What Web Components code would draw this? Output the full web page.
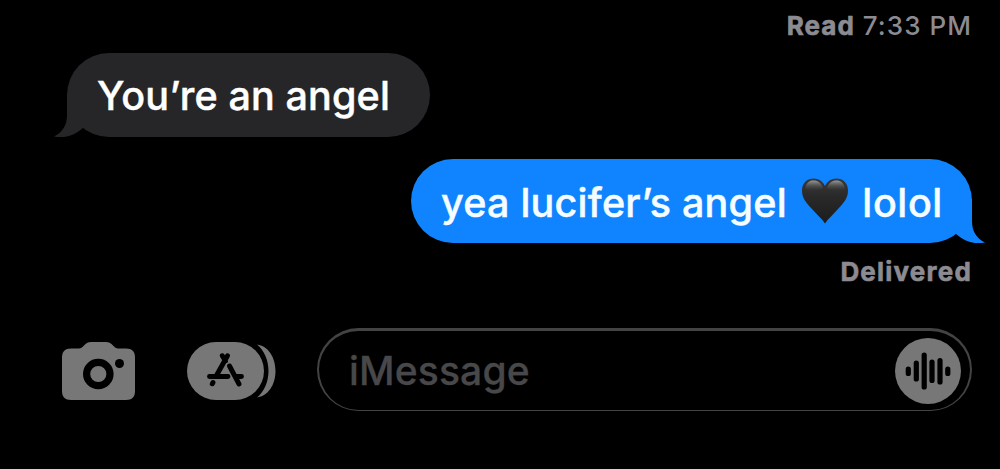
<!DOCTYPE html>
<html lang="en">
<head>
<meta charset="utf-8">
<title>Messages</title>
<style>
  body {
    margin: 0;
    background: #000;
    font-family: Inter, "Liberation Sans", sans-serif;
  }

  message-status b {
    -webkit-text-stroke: 0.6px;
  }
</style>
</head>
<body>
<message-thread>
  <message-status><b>Read</b> 7:33 PM</message-status>
  <message-bubble style="--width: 363px; --spacing: 0.13px">You’re an angel</message-bubble>
  <message-bubble class="sent" style="--width: 561px; --spacing: 0.22px"><span>yea lucifer’s angel</span><black-heart></black-heart><span>lolol</span></message-bubble>
  <message-status class="below"><b>Delivered</b></message-status>
  <compose-bar slot="compose">iMessage</compose-bar>
</message-thread>

<script>
class MessageThread extends HTMLElement {
  constructor() {
    super();
    this.root = this.attachShadow({mode: 'open'});
    this.root.innerHTML = `
      <style>
        :host {
          background: #000;
          box-sizing: border-box;
          display: flex;
          flex-direction: column;
          height: 469px;
          overflow: hidden;
          padding: 0 28px 0 62px;
        }
      </style>
      <slot></slot>
      <slot name="compose"></slot>
    `;
  }
}
window.customElements.define('message-thread', MessageThread);

class MessageStatus extends HTMLElement {
  constructor() {
    super();
    this.root = this.attachShadow({mode: 'open'});
    this.root.innerHTML = `
      <style>
        :host {
          align-self: flex-end;
          color: #8c8b92;
          display: block;
          font-size: 26px;
          font-weight: 500;
          height: 52.5px;
          letter-spacing: 1.05px;
          line-height: 51px;
          white-space: nowrap;
        }

        :host(.below) {
          height: 85px;
          letter-spacing: 1.2px;
          line-height: 58px;
        }
      </style>
      <slot></slot>
    `;
  }
}
window.customElements.define('message-status', MessageStatus);

class MessageBubble extends HTMLElement {
  constructor() {
    super();
    this.root = this.attachShadow({mode: 'open'});
    this.root.innerHTML = `
      <style>
        :host {
          -webkit-text-stroke: 0.45px;
          align-items: center;
          background: #262628;
          border-radius: 42.25px;
          box-sizing: border-box;
          color: #fff;
          display: flex;
          flex: none;
          font-size: 39.5px;
          font-weight: 500;
          height: 84.5px;
          letter-spacing: var(--spacing);
          line-height: 84px;
          margin: 0 0 21.5px 5px;
          padding: 2px 0 0 30px;
          position: relative;
          white-space: nowrap;
          width: var(--width);
        }

        :host(.sent) {
          align-self: flex-end;
          background: #0f84fe;
          color: #f5fdff;
          margin: 0;
          padding-top: 4px;
        }

        .tail {
          bottom: 0;
          fill: #262628;
          left: -13px;
          position: absolute;
        }

        :host(.sent) .tail {
          fill: #0f84fe;
          left: auto;
          right: -13px;
          transform: scaleX(-1);
        }

        ::slotted(span:last-child) {
          letter-spacing: 0.6px;
        }
      </style>
      <svg class="tail" width="40" height="44" viewBox="0 0 40 44">
        <path d="M13 0V22C13 32 9 39 0 43.5C11 45.5 20 43 29 35L40 20V0Z"/>
      </svg>
      <slot></slot>
    `;
  }
}
window.customElements.define('message-bubble', MessageBubble);

class BlackHeart extends HTMLElement {
  constructor() {
    super();
    this.root = this.attachShadow({mode: 'open'});
    this.root.innerHTML = `
      <style>
        :host {
          display: block;
          flex: none;
          height: 49px;
          margin: 0 14.5px 0 15px;
          width: 46px;
        }

        svg {
          display: block;
        }
      </style>
      <svg width="46" height="46" viewBox="0 0 46 46" role="img" aria-label="🖤">
        <defs>
          <linearGradient id="body" x1="0" y1="0" x2="0" y2="1">
            <stop offset="0" stop-color="#39393b"/>
            <stop offset=".4" stop-color="#29292a"/>
            <stop offset="1" stop-color="#1c1c1d"/>
          </linearGradient>
          <linearGradient id="shine" x1="0" y1="0" x2="0" y2="1">
            <stop offset="0" stop-color="#aaa" stop-opacity=".85"/>
            <stop offset="1" stop-color="#444" stop-opacity="0"/>
          </linearGradient>
        </defs>
        <path fill="url(#body)" d="M23 45.5C20 41 15 36.500 10 31C4 24.500 0 20 0 12.500C0 5 5 .5 11.500 .5C17 .5 21 3.500 23 8C25 3.500 29 .5 34.500 .5C41 .5 46 5 46 12.500C46 20 42 24.500 36 31C31 36.500 26 41 23 45.500Z"/>
        <path fill="url(#shine)" d="M3 12C3.500 5 7 2.500 11.500 2.500C16 2.500 19.500 5 21 10C16 13 9 14 3 12Z"/>
        <path fill="url(#shine)" d="M43 12C42.500 5 39 2.500 34.500 2.500C30 2.500 26.500 5 25 10C30 13 37 14 43 12Z"/>
      </svg>
    `;
  }
}
window.customElements.define('black-heart', BlackHeart);

class ComposeBar extends HTMLElement {
  constructor() {
    super();
    this.root = this.attachShadow({mode: 'open'});
    this.root.innerHTML = `
      <style>
        :host {
          align-items: center;
          display: flex;
          height: 83px;
        }

        svg {
          display: block;
          fill: #777;
          flex: none;
        }

        .camera,
        .apps {
          padding-top: 2px;
        }

        .apps {
          margin: 0 41px 0 52px;
        }

        .field {
          -webkit-text-stroke: 0.3px;
          align-items: center;
          border: 2px solid #434345;
          border-top-width: 3px;
          border-bottom-width: 1.5px;
          border-radius: 42px;
          box-sizing: border-box;
          color: #48484a;
          display: flex;
          flex: 1;
          font-size: 39px;
          font-weight: 500;
          height: 83px;
          justify-content: space-between;
          letter-spacing: 0.15px;
          padding: 0 9px 0 30px;
        }
      </style>
      <svg class="camera" width="73" height="58" viewBox="0 0 73 58">
        <path d="M9 6.500H17C19 6.500 20 5.500 21.500 4L23.500 2C25 .7 26.500 0 29 0H44C46.500 0 48 .7 49.500 2L51.500 4C53 5.500 54 6.500 56 6.500H64C70 6.500 73 9.500 73 15.500V49C73 55 70 58 64 58H9C3 58 0 55 0 49V15.500C0 9.500 3 6.500 9 6.500Z"/>
        <circle cx="36.300" cy="32" r="11.700" fill="none" stroke="#000" stroke-width="7.200"/>
        <circle cx="57.500" cy="21.500" r="4.500" fill="#000"/>
      </svg>
      <svg class="apps" width="89" height="58" viewBox="0 0 89 58">
        <rect width="77" height="58" rx="29"/>
        <path d="M70 55.500C77 50 81.500 40 81.500 29C81.500 18 77 8 70 2.500C81 4 88.500 15 88.500 29C88.500 43 81 54 70 55.500Z"/>
        <g fill="none" stroke="#000" stroke-width="4.900" stroke-linecap="round">
          <path d="M35.300 13.700L38.500 19M40.500 13.700L30 32.500M42.500 24L52 42M22.500 34.500H41M49 34.500H54.500M26 40.500L25.300 41.800"/>
        </g>
      </svg>
      <div class="field">
        <slot></slot>
        <svg width="66" height="66" viewBox="0 0 66 66">
          <circle cx="33" cy="33" r="33"/>
          <path fill="none" stroke="#000" stroke-width="5.200" stroke-linecap="round" d="M13.300 31V35.500M21.300 25V41M29.200 17V49M37 24V42.500M45 22.500V44M52.800 31V35.500"/>
        </svg>
      </div>
    `;
  }
}
window.customElements.define('compose-bar', ComposeBar);
</script>
</body>
</html>
